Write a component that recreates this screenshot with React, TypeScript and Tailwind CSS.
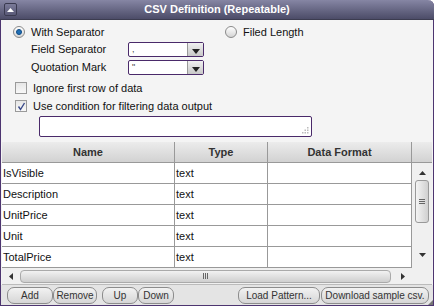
const rows = ["IsVisible", "Description", "UnitPrice", "Unit", "TotalPrice"];

function Radio({ checked, label }: { checked?: boolean; label: string }) {
  return (
    <label className="flex items-center gap-[6px] h-[14px]">
      <span className="w-[12px] h-[12px] rounded-full border border-[#8a8a8a] bg-gradient-to-b from-[#ffffff] to-[#d4d4d4] flex items-center justify-center">
        {checked && <span className="w-[6px] h-[6px] rounded-full bg-[#1f6fb5] border border-[#0d4a85]" />}
      </span>
      <span>{label}</span>
    </label>
  );
}

function Check({ checked, label }: { checked?: boolean; label: string }) {
  return (
    <label className="flex items-center gap-[6px] h-[12px]">
      <span className="w-[12px] h-[12px] border border-[#9a9a9a] bg-gradient-to-b from-[#e6e6e6] to-[#f8f8f8] flex items-center justify-center">
        {checked && (
          <svg width="9" height="9" viewBox="0 0 9 9">
            <path d="M1.5 4.5 L3.5 7.5 L7.5 1" stroke="#3a4a8a" strokeWidth="1.4" fill="none" />
          </svg>
        )}
      </span>
      <span>{label}</span>
    </label>
  );
}

function Select({ value }: { value: string }) {
  return (
    <div className="w-[76px] h-[15px] border border-[#4a2a6a] rounded-[2px] bg-white flex">
      <span className="flex-1 px-[3px] text-[9px] leading-[13px] text-[#444]">{value}</span>
      <span className="w-[16px] h-full border-l border-[#999] bg-gradient-to-b from-[#f0f0f0] to-[#c8c8c8] flex items-end justify-center pb-[2px]">
        <svg width="8" height="5" viewBox="0 0 8 5">
          <path d="M0 0 H8 L4 5 Z" fill="#222" />
        </svg>
      </span>
    </div>
  );
}

function Btn({ label, w }: { label: string; w: string }) {
  return (
    <button className={`${w} h-[17px] rounded-[7px] border border-[#8c8c8c] bg-gradient-to-b from-[#f2f2f2] to-[#d6d6d6] text-[10px] leading-[15px] text-[#333] text-center whitespace-nowrap`}>
      {label}
    </button>
  );
}

export default function App() {
  return (
    <div className="w-[434px] h-[308px] bg-white" style={{ fontFamily: '"Liberation Sans", Arial, sans-serif' }}>
      <div className="w-[434px] h-[306px] border border-[#4d3570] border-t-0 rounded-tr-[6px] bg-[#f4f4f4] flex flex-col text-[11px] leading-[13px] text-[#111]">
        <div className="h-[20px] shrink-0 -mx-[1px] rounded-tr-[6px] bg-gradient-to-b from-[#8686a4] to-[#4c4c68] border-b border-[#3c3c50] flex items-center relative">
          <span className="absolute left-[4px] top-[3px] w-[13px] h-[13px] border border-[#3a3a50] rounded-[2px] bg-gradient-to-b from-[#7a7a98] to-[#5a5a78] flex items-center justify-center">
            <svg width="7" height="4" viewBox="0 0 7 4">
              <path d="M0 4 H7 L3.5 0 Z" fill="#fff" />
            </svg>
          </span>
          <span className="flex-1 text-center font-bold text-white text-[11px]">CSV Definition (Repeatable)</span>
        </div>

        <div className="pl-[12px] pt-[5px]">
          <div className="flex h-[14px]">
            <div className="w-[212px]">
              <Radio checked label="With Separator" />
            </div>
            <Radio label="Filed Length" />
          </div>
          <div className="pl-[18px] mt-[3px] flex flex-col gap-[3px]">
            <div className="flex items-center h-[15px]">
              <span className="w-[97px]">Field Separator</span>
              <Select value="," />
            </div>
            <div className="flex items-center h-[15px]">
              <span className="w-[97px]">Quotation Mark</span>
              <Select value={'"'} />
            </div>
          </div>
          <div className="pl-[2px] mt-[7px] flex flex-col gap-[6px]">
            <Check label="Ignore first row of data" />
            <Check checked label="Use condition for filtering data output" />
          </div>
          <div className="ml-[26px] mt-[4px] w-[273px] h-[21px] border border-[#4a2a6a] rounded-[2px] bg-white relative">
            <svg className="absolute right-[2px] bottom-[2px]" width="7" height="7" viewBox="0 0 7 7">
              <rect x="5" y="0" width="1.5" height="1.5" fill="#bbb" />
              <rect x="2.5" y="2.5" width="1.5" height="1.5" fill="#bbb" />
              <rect x="5" y="2.5" width="1.5" height="1.5" fill="#bbb" />
              <rect x="0" y="5" width="1.5" height="1.5" fill="#bbb" />
              <rect x="2.5" y="5" width="1.5" height="1.5" fill="#bbb" />
              <rect x="5" y="5" width="1.5" height="1.5" fill="#bbb" />
            </svg>
          </div>
        </div>

        <div className="mt-[5px] ml-[1px] mr-[1px] flex flex-col">
          <div className="flex h-[21px] bg-gradient-to-b from-[#ececec] to-[#d2d2d2] border-b border-[#999] font-bold text-[#333]">
            <div className="w-[173px] border-r border-[#999] text-center leading-[20px]">Name</div>
            <div className="w-[93px] border-r border-[#999] text-center leading-[20px]">Type</div>
            <div className="w-[144px] border-r border-[#999] text-center leading-[20px]">Data Format</div>
            <div className="flex-1" />
          </div>
          <div className="flex">
            <div className="flex flex-col bg-white">
              {rows.map((r) => (
                <div key={r} className="flex h-[21px] border-b border-[#999]">
                  <div className="w-[173px] border-r border-[#999] pl-[1px] leading-[20px]">{r}</div>
                  <div className="w-[93px] border-r border-[#999] pl-[1px] leading-[20px]">text</div>
                  <div className="w-[144px] border-r border-[#999]" />
                </div>
              ))}
            </div>
            <div className="flex-1 bg-[#f0f0f0] flex flex-col items-center">
              <svg className="mt-[8px]" width="7" height="4" viewBox="0 0 7 4">
                <path d="M0 4 H7 L3.5 0 Z" fill="#333" />
              </svg>
              <div className="mt-[5px] w-[14px] h-[43px] rounded-[3px] border border-[#999] bg-gradient-to-r from-[#f4f4f4] to-[#d0d0d0] flex flex-col items-center justify-center gap-[1px]">
                <span className="w-[6px] h-[1px] bg-[#666]" />
                <span className="w-[6px] h-[1px] bg-[#666]" />
                <span className="w-[6px] h-[1px] bg-[#666]" />
              </div>
              <svg className="mt-[30px]" width="7" height="4" viewBox="0 0 7 4">
                <path d="M0 0 H7 L3.5 4 Z" fill="#333" />
              </svg>
            </div>
          </div>
          <div className="flex h-[17px] bg-[#f0f0f0] border-b border-[#bbb] items-center">
            <div className="w-[411px] flex items-center">
              <svg className="ml-[7px]" width="4" height="7" viewBox="0 0 4 7">
                <path d="M4 0 V7 L0 3.5 Z" fill="#333" />
              </svg>
              <div className="ml-[7px] w-[371px] h-[13px] rounded-[4px] border border-[#aaa] bg-gradient-to-b from-[#f2f2f2] to-[#cfcfcf] flex items-center justify-center">
                <span className="w-[1px] h-[6px] bg-[#666]" />
                <span className="w-[1px] h-[6px] bg-[#666] ml-[1px]" />
                <span className="w-[1px] h-[6px] bg-[#666] ml-[1px]" />
              </div>
              <svg className="ml-[10px]" width="4" height="7" viewBox="0 0 4 7">
                <path d="M0 0 V7 L4 3.5 Z" fill="#333" />
              </svg>
            </div>
          </div>
        </div>

        <div className="flex-1 bg-[#e4e4e4] flex items-center pl-[6px] pr-[4px] relative">
          <div className="flex">
            <Btn label="Add" w="w-[46px]" />
            <Btn label="Remove" w="w-[44px]" />
          </div>
          <div className="flex ml-[5px]">
            <Btn label="Up" w="w-[36px]" />
            <Btn label="Down" w="w-[36px]" />
          </div>
          <div className="flex ml-auto gap-[1px]">
            <Btn label="Load Pattern..." w="w-[82px]" />
            <Btn label="Download sample csv." w="w-[108px]" />
          </div>
          <svg className="absolute right-[0px] bottom-[0px]" width="5" height="5" viewBox="0 0 5 5">
            <path d="M5 0 V5 H0 Z" fill="#777" />
          </svg>
        </div>
      </div>
    </div>
  );
}
